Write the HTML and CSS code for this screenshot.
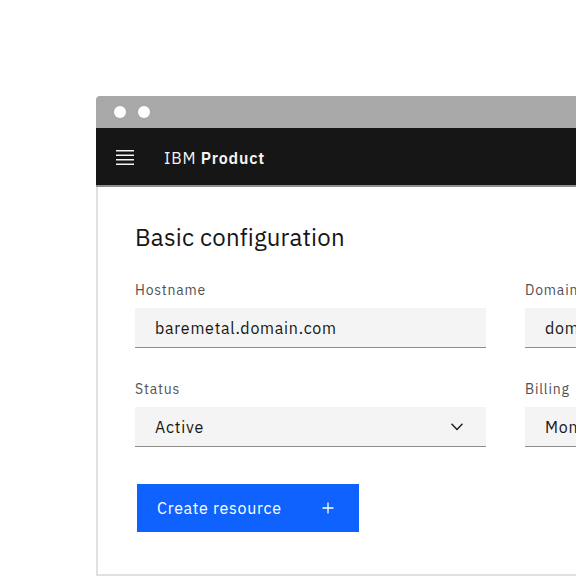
FILE: index.html
```html
<!DOCTYPE html>
<html lang="en">
<head>
    <meta charset="UTF-8">
    <meta name="viewport" content="width=device-width, initial-scale=1.0">
    <title>IBM Product - Basic configuration</title>
    <link rel="stylesheet" href="styles.css">
</head>
<body>
    <div class="window">
        <div class="titlebar">
            <span class="dot"></span>
            <span class="dot"></span>
        </div>

        <header class="app-header">
            <svg class="menu-icon" width="18" height="16" viewBox="0 0 18 16" aria-hidden="true">
                <rect x="0" y="1" width="18" height="1.5" fill="#f4f4f4"/>
                <rect x="0" y="5.5" width="18" height="1.5" fill="#f4f4f4"/>
                <rect x="0" y="10" width="18" height="1.5" fill="#f4f4f4"/>
                <rect x="0" y="14.5" width="18" height="1.5" fill="#f4f4f4"/>
            </svg>
            <span class="brand">IBM <strong>Product</strong></span>
        </header>

        <main class="content">
            <h1>Basic configuration</h1>

            <div class="form-grid">
                <div class="field">
                    <label for="hostname">Hostname</label>
                    <input type="text" id="hostname" value="baremetal.domain.com">
                </div>
                <div class="field">
                    <label for="domain">Domain</label>
                    <input type="text" id="domain" value="domain.com">
                </div>
                <div class="field">
                    <label for="status">Status</label>
                    <div class="select">
                        <span>Active</span>
                        <svg width="12" height="8" viewBox="0 0 12 8" aria-hidden="true">
                            <path d="M0.5 0.8 L6 6.5 L11.5 0.8" fill="none" stroke="#161616" stroke-width="1.3"/>
                        </svg>
                    </div>
                </div>
                <div class="field">
                    <label for="billing">Billing</label>
                    <div class="select">
                        <span>Monthly</span>
                    </div>
                </div>
            </div>

            <button class="primary-btn">
                Create resource
                <svg width="12" height="12" viewBox="0 0 12 12" aria-hidden="true">
                    <path d="M6 0.5 V11.5 M0.5 6 H11.5" stroke="#fff" stroke-width="1.3"/>
                </svg>
            </button>
        </main>
    </div>
</body>
</html>
```

FILE: styles.css
```css
* {
    margin: 0;
    padding: 0;
    box-sizing: border-box;
}

body {
    width: 576px;
    height: 576px;
    overflow: hidden;
    background: #fff;
    padding: 96px 0 0 96px;
    font-family: 'IBM Plex Sans', 'Noto Sans', sans-serif;
    color: #161616;
}

.window {
    width: 560px;
}

.titlebar {
    height: 32px;
    background: #a8a8a8;
    border-top-left-radius: 4px;
    display: flex;
    align-items: center;
    gap: 12px;
    padding-left: 18px;
}

.dot {
    width: 12px;
    height: 12px;
    border-radius: 50%;
    background: #fff;
}

.app-header {
    height: 59px;
    background: #161616;
    border-bottom: 2px solid #8d8d8d;
    display: flex;
    align-items: center;
    padding: 2px 0 0 20px;
    color: #f4f4f4;
}

.menu-icon {
    margin: -2px 30px 0 0;
}

.brand {
    font-size: 16px;
    letter-spacing: 0.8px;
}

.brand strong {
    font-weight: 600;
}

.content {
    height: 389px;
    border-left: 2px solid #e0e0e0;
    border-bottom: 2px solid #e0e0e0;
    padding: 34px 0 0 37px;
}

h1 {
    font-size: 24px;
    font-weight: 400;
    line-height: 32px;
    letter-spacing: 0.2px;
    margin-bottom: 28px;
}

.form-grid {
    display: grid;
    grid-template-columns: 351px 351px;
    column-gap: 39px;
    row-gap: 32px;
}

.field label {
    display: block;
    font-size: 14px;
    line-height: 18px;
    color: #525252;
    letter-spacing: 0.8px;
    margin-bottom: 9px;
}

.field input,
.select {
    width: 100%;
    height: 40px;
    background: #f4f4f4;
    border: none;
    border-bottom: 1px solid #8d8d8d;
    font-family: inherit;
    font-size: 16px;
    letter-spacing: 0.75px;
    color: #161616;
    padding: 0 20px;
    outline: none;
}

.select {
    display: flex;
    align-items: center;
    justify-content: space-between;
    padding-right: 23px;
}

.primary-btn {
    margin: 37px 0 0 2px;
    width: 222px;
    height: 48px;
    background: #0f62fe;
    border: none;
    color: #fff;
    font-family: inherit;
    font-size: 16px;
    letter-spacing: 0.7px;
    display: flex;
    align-items: center;
    justify-content: space-between;
    padding: 0 25px 0 20px;
    cursor: pointer;
}
```
